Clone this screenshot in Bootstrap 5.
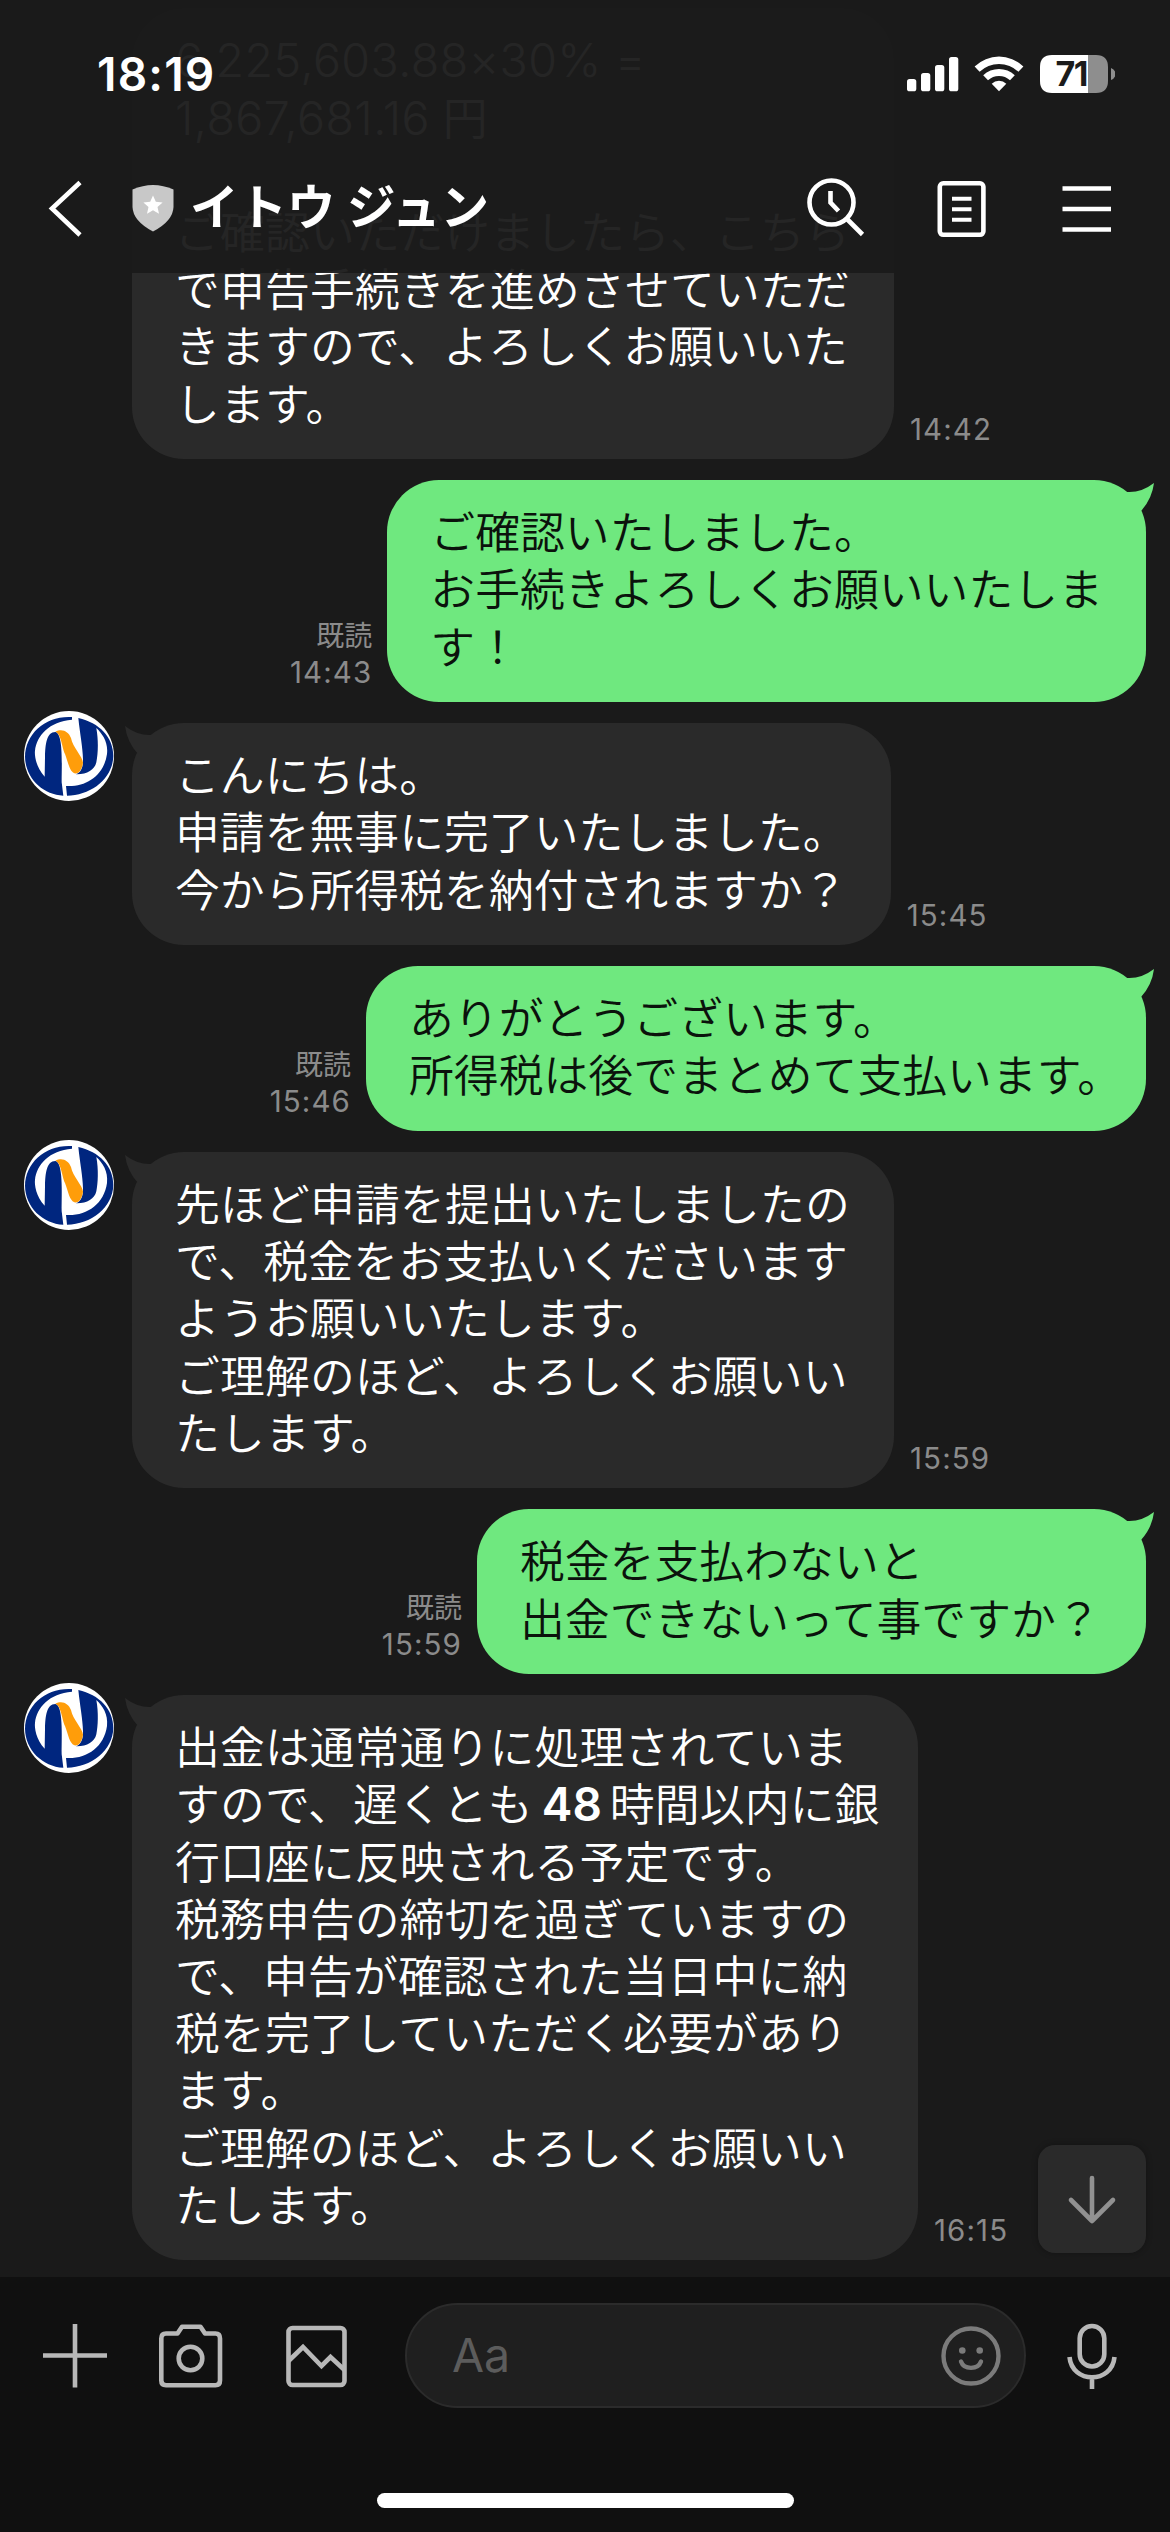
<!DOCTYPE html>
<html lang="ja">
<head>
<meta charset="utf-8">
<meta name="viewport" content="width=device-width, initial-scale=1">
<title>イトウ ジュン</title>
<link href="https://cdn.jsdelivr.net/npm/bootstrap@5.3.0/dist/css/bootstrap.min.css" rel="stylesheet">
<style>
  :root { --chat-bg: #1a1a1a; --other: #2a2a2a; --mine: #6fe87f; }
  body { background: var(--chat-bg); color: #fff; font-family: Inter, "Noto Sans CJK JP", sans-serif; }
  svg { display: block; flex: none; }
  .phone { width: 1170px; height: 2532px; }
  .topbar { height: 273px; background: rgba(26, 26, 26, .953); z-index: 5; }
  .status-row { height: 148px; padding: 0 55px 0 97px; }
  .clock { font-size: 46px; font-weight: 600; line-height: 1; letter-spacing: 1.2px; }
  .title-row { height: 120px; padding: 0 59px 0 46px; }
  .title-text { font-size: 48.5px; font-weight: 700; line-height: 1; }
  .chat { padding: 0 24px 17px; min-height: 0; }
  .thread { gap: 21.4px; }
  .line-row { line-height: 57.2px; font-size: 44.85px; font-weight: 350; }
  .line-row.first-row { padding-left: 108px; }
  .bubble { position: relative; padding: 25px 43px; border-radius: 52px; white-space: nowrap; }
  .bubble.other { background: var(--other); }
  .bubble.mine { background: var(--mine); color: #0b120c; }
  .bubble.wide { width: 762px; letter-spacing: .15px; }
  .bubble.trim { width: 780px; padding-right: 0; }
  .bubble.question { width: 669px; }
  .bubble.tall { width: 786px; letter-spacing: .1px; }
  .tail { position: absolute; top: 2px; width: 34px; height: 30px; }
  .other .tail { left: -8px; transform: scaleX(-1); }
  .mine .tail { right: -9px; }
  .avatar { width: 90px; height: 90px; margin: -12px 18px 0 0; }
  .stamp { color: #8b8b8b; font-size: 29.5px; line-height: 36px; font-weight: 400; padding-bottom: 12px; letter-spacing: 1.1px; }
  .stamp.text-end { margin-right: -1px; }
  .stamp .read { font-size: 28px; letter-spacing: 0; }
  .num { font-size: 46.5px; line-height: 1; letter-spacing: .5px; }
  .num.hours { letter-spacing: 0; margin: 0 8px 0 9px; font-size: 46px; }
  .to-bottom { position: absolute; right: 24px; bottom: 24px; width: 108px; height: 108px; border-radius: 17px; background: var(--other); box-shadow: 0 0 6px rgba(0,0,0,.3); }
  .composer { height: 255px; background: #101010; padding: 26px 0 0 43px; }
  .field { width: 621px; height: 105px; margin-left: 58px; border: 2px solid #2b2b2b; background: #1f1f1f; padding: 0 23px 0 45px; }
  .hint { font-size: 46.5px; color: #5c5c5c; line-height: 1; }
  .mic { margin-left: 41px; }
  .home { width: 417px; height: 15px; margin: 85px 0 0 334px; }
</style>
<script src="https://cdn.jsdelivr.net/npm/bootstrap@5.3.0/dist/js/bootstrap.bundle.min.js"></script>
</head>
<body>
<svg width="0" height="0" class="position-absolute">
  <symbol id="logo" viewBox="24 21 270 270">
    <circle cx="159" cy="156" r="135" fill="#fff"/>
    <path fill="#00267f" d="M168 39C90 34 28 88 27 158C28 222 80 272 142 275L137 235C137 180 142 88 118 84C92 84 88 120 87 160L86 218C60 190 55 155 57 140C62 95 100 52 168 47Z"/>
    <path fill="#00267f" d="M187 42C250 56 292 100 292 156C290 225 225 274 153 275L150 246C210 250 264 215 273 150C277 115 260 90 241 72C248 110 246 150 241 175C236 198 212 212 180 211C195 205 202 190 201 165C200 130 192 90 187 42Z"/>
    <path fill="#ff9d0a" d="M118 83C138 72 158 82 165 102C170 130 200 158 201 176C198 195 190 210 175 208C160 200 158 180 147 150C138 130 135 88 118 83Z"/>
  </symbol>
  <symbol id="tail" viewBox="0 0 34 30"><path d="M6 10Q20 11 33 1Q31 17 20 29L6 29Z"/></symbol>
</svg>

<div class="phone position-relative d-flex flex-column overflow-hidden">
  <header class="topbar position-absolute top-0 start-0 w-100">
    <div class="status-row d-flex align-items-center justify-content-between">
      <span class="clock">18:19</span>
      <svg width="210" height="42" viewBox="905 53 210 42" fill="#fff">
        <rect x="907" y="79" width="9.3" height="12.3" rx="2.6"/><rect x="921" y="73" width="9.3" height="18.3" rx="2.6"/>
        <rect x="935" y="65" width="9.3" height="26.3" rx="2.6"/><rect x="949" y="57" width="9.3" height="34.3" rx="2.6"/>
        <path d="M974.6 66.5A35 35 0 0 1 1023.4 66.5L1018.4 71.8A28 28 0 0 0 979.6 71.8Z"/>
        <path d="M983.2 75.2A23 23 0 0 1 1014.8 75.2L1010 80.3A16 16 0 0 0 988 80.3Z"/>
        <path d="M991.7 83.7A10.5 10.5 0 0 1 1006.3 83.7L999 91.3Z"/>
        <path d="M1052 55H1088V93H1052Q1040 93 1040 81V67Q1040 55 1052 55Z"/>
        <path fill="#8e8e8e" d="M1088 55H1096Q1108 55 1108 67V81Q1108 93 1096 93H1088ZM1111 68Q1115.500 70 1115.500 74T1111 80Z"/>
        <text x="1055.500" y="86.200" fill="#1b1b1b" font-family="Inter" font-weight="700" font-size="34" textLength="33">71</text>
      </svg>
    </div>
    <div class="title-row d-flex align-items-center">
      <svg width="38" height="58" viewBox="46 179 38 58" fill="none" stroke="#fff" stroke-width="4.600"><path d="M80 182.500L52 208.500L80 235"/></svg>
      <svg class="ms-5" width="42" height="48" viewBox="132 183 42 48"><path fill="#c8c8c8" d="M132.500 188.500Q153 179.500 173.500 188.500V206Q173 220 153 230.500Q133 220 132.500 206Z"/><path fill="#fff" d="M153 194.500l2.800 6.200 6.800.7-5.100 4.600 1.500 6.700-6-3.500-6 3.500 1.500-6.700-5.100-4.600 6.800-.7z"/></svg>
      <span class="title-text ms-3">イトウ ジュン</span>
      <svg class="ms-auto" width="304" height="60" viewBox="807 177 304 60" fill="none" stroke="#fff" stroke-width="4.600">
        <circle cx="831.500" cy="201.500" r="22"/><path d="M846.500 217.500L862.500 233.500M830.500 190V201.500L838.500 210"/>
        <rect x="939.800" y="182.300" width="43.600" height="51.500" rx="3.500"/><path stroke-width="4" d="M952 197.700h19.500M952 208.200h19.500M952 218.700h19.500"/>
        <path d="M1062.500 187.500H1111M1062.500 208H1111M1062.500 228.500H1111"/>
      </svg>
    </div>
  </header>

  <main class="chat flex-grow-1 d-flex flex-column justify-content-end position-relative">
    <div class="thread d-flex flex-column">
      <div class="d-flex line-row first-row">
        <div class="bubble other wide"><span class="num">6,225,603.88×30% =</span><br><span class="num">1,867,681.16</span> 円<br><br>ご確認いただけましたら、こちら<br>で申告手続きを進めさせていただ<br>きますので、よろしくお願いいた<br>します。</div>
        <div class="stamp align-self-end ps-3">14:42</div>
      </div>

      <div class="d-flex line-row justify-content-end">
        <div class="stamp align-self-end text-end pe-3"><span class="read">既読</span><br>14:43</div>
        <div class="bubble mine">ご確認いたしました。<br>お手続きよろしくお願いいたしま<br>す！<svg class="tail" fill="#6fe87f"><use href="#tail"/></svg></div>
      </div>

      <div class="d-flex line-row">
        <svg class="avatar"><use href="#logo"/></svg>
        <div class="bubble other">こんにちは。<br>申請を無事に完了いたしました。<br>今から所得税を納付されますか？<svg class="tail" fill="#2a2a2a"><use href="#tail"/></svg></div>
        <div class="stamp align-self-end ps-3">15:45</div>
      </div>

      <div class="d-flex line-row justify-content-end">
        <div class="stamp align-self-end text-end pe-3"><span class="read">既読</span><br>15:46</div>
        <div class="bubble mine trim">ありがとうございます。<br>所得税は後でまとめて支払います。<svg class="tail" fill="#6fe87f"><use href="#tail"/></svg></div>
      </div>

      <div class="d-flex line-row">
        <svg class="avatar"><use href="#logo"/></svg>
        <div class="bubble other wide">先ほど申請を提出いたしましたの<br>で、税金をお支払いくださいます<br>ようお願いいたします。<br>ご理解のほど、よろしくお願いい<br>たします。<svg class="tail" fill="#2a2a2a"><use href="#tail"/></svg></div>
        <div class="stamp align-self-end ps-3">15:59</div>
      </div>

      <div class="d-flex line-row justify-content-end">
        <div class="stamp align-self-end text-end pe-3"><span class="read">既読</span><br>15:59</div>
        <div class="bubble mine question">税金を支払わないと<br>出金できないって事ですか？<svg class="tail" fill="#6fe87f"><use href="#tail"/></svg></div>
      </div>

      <div class="d-flex line-row">
        <svg class="avatar"><use href="#logo"/></svg>
        <div class="bubble other tall">出金は通常通りに処理されていま<br>すので、遅くとも<span class="num hours fw-semibold">48</span>時間以内に銀<br>行口座に反映される予定です。<br>税務申告の締切を過ぎていますの<br>で、申告が確認された当日中に納<br>税を完了していただく必要があり<br>ます。<br>ご理解のほど、よろしくお願いい<br>たします。<svg class="tail" fill="#2a2a2a"><use href="#tail"/></svg></div>
        <div class="stamp align-self-end ps-3">16:15</div>
      </div>
    </div>

    <div class="to-bottom d-flex align-items-center justify-content-center">
      <svg width="52" height="52" viewBox="1066 2172 52 52" fill="none" stroke="#919191" stroke-width="4.600" stroke-linecap="round" stroke-linejoin="round"><path d="M1092 2177V2220M1071 2199L1092 2220L1113 2199"/></svg>
    </div>
  </main>

  <footer class="composer d-flex flex-column flex-shrink-0">
    <div class="d-flex align-items-center">
      <svg width="304" height="64" viewBox="43 2323.500 304 64" fill="none" stroke="#b8b8b8" stroke-width="4.600">
        <path d="M43 2355H107M75 2323.500V2387"/>
        <path stroke-linejoin="round" d="M166 2333H177.500L182 2326.300H200.500L205 2333H215.500Q220 2333 220 2338V2380Q220 2384.700 215.500 2384.700H166Q161.300 2384.700 161.300 2380V2338Q161.300 2333 166 2333Z"/><circle cx="190.500" cy="2358" r="11.800"/>
        <rect x="288.500" y="2327.500" width="56" height="57" rx="4"/><path d="M288.500 2360.500L303 2346.500L321.500 2365.500L330.500 2356.500L344.500 2369.500"/>
      </svg>
      <div class="field rounded-pill d-flex align-items-center justify-content-between">
        <span class="hint">Aa</span>
        <svg width="60" height="60" viewBox="0 0 60 60" fill="none" stroke="#7b7b7b" stroke-width="4.400" stroke-linecap="round"><circle cx="30" cy="30" r="27.500"/><path d="M20 35.500C23 44 37 44 40 35.500"/><g fill="#7b7b7b" stroke="none"><circle cx="21.300" cy="24.500" r="3.300"/><circle cx="38.700" cy="24.500" r="3.300"/></g></svg>
      </div>
      <svg class="mic" width="50" height="66" viewBox="1067 2322 50 66" fill="none" stroke="#b8b8b8" stroke-width="4.600"><rect x="1079.700" y="2325" width="24.600" height="40.500" rx="12.300"/><path d="M1069.500 2356C1072 2383 1112 2383 1114.500 2356M1092 2376V2388"/></svg>
    </div>
    <div class="home rounded-pill bg-white"></div>
  </footer>
</div>
</body>
</html>
